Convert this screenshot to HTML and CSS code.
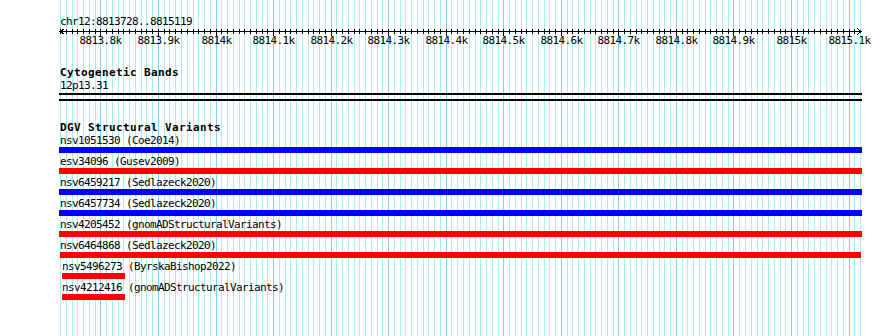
FILE: index.html
```html
<!DOCTYPE html>
<html lang="en">
  <head>
    <meta charset="UTF-8" />
    <meta name="viewport" content="width=device-width, initial-scale=1.0" />
    <title>chr12:8813728..8815119</title>
    <link rel="stylesheet" href="styles.css">
  </head>
  <body>
    <div class="panel">
      <svg class="grid" id="grid" width="803" height="336"></svg>

      <div class="ruler-track">
        <div class="ruler-title">chr12:8813728..8815119</div>
        <svg class="ruler" id="ruler" width="803" height="20"></svg>
      </div>

      <div class="track">
        <div class="track-title">Cytogenetic Bands</div>
        <div class="label">12p13.31</div>
        <div class="band-lines"></div>
      </div>

      <div class="track dgv">
        <div class="track-title">DGV Structural Variants</div>
        <div class="feature">
          <div class="label">nsv1051530 (Coe2014)</div>
          <div class="bar blue"></div>
        </div>
        <div class="feature">
          <div class="label">esv34096 (Gusev2009)</div>
          <div class="bar red"></div>
        </div>
        <div class="feature">
          <div class="label">nsv6459217 (Sedlazeck2020)</div>
          <div class="bar blue"></div>
        </div>
        <div class="feature">
          <div class="label">nsv6457734 (Sedlazeck2020)</div>
          <div class="bar blue"></div>
        </div>
        <div class="feature">
          <div class="label">nsv4205452 (gnomADStructuralVariants)</div>
          <div class="bar red"></div>
        </div>
        <div class="feature">
          <div class="label">nsv6464868 (Sedlazeck2020)</div>
          <div class="bar red inset"></div>
        </div>
        <div class="feature short">
          <div class="label">nsv5496273 (ByrskaBishop2022)</div>
          <div class="bar red"></div>
        </div>
        <div class="feature short">
          <div class="label">nsv4212416 (gnomADStructuralVariants)</div>
          <div class="bar red"></div>
        </div>
      </div>
    </div>

    <script>
      const START = 8813728;
      const END = 8815119;
      const SCALE = 0.5755;
      const NS = "http://www.w3.org/2000/svg";

      // pixel column of a base position, relative to the panel (page x 59)
      function px(pos) {
        return Math.floor(59.5 + (pos - START) * SCALE) - 59;
      }

      function add(svg, tag, attrs, text) {
        const el = document.createElementNS(NS, tag);
        for (const k in attrs) el.setAttribute(k, attrs[k]);
        if (text) el.textContent = text;
        svg.appendChild(el);
        return el;
      }

      const grid = document.getElementById("grid");
      const ruler = document.getElementById("ruler");

      // main ruler line with arrow heads
      add(ruler, "line", { x1: 1, y1: 4.5, x2: 802, y2: 4.5, class: "stroke" });
      add(ruler, "polyline", { points: "5,2 1,4.5 5,7", class: "stroke" });
      add(ruler, "polyline", { points: "798,1 802,4.5 798,8", class: "stroke" });

      for (let pos = Math.ceil(START / 10) * 10; pos <= END + 1; pos += 10) {
        const x = px(pos) + 0.5;
        const major = pos % 100 === 0;

        add(grid, "line", {
          x1: x, y1: 0, x2: x, y2: 336,
          class: major ? "major" : "minor"
        });

        if (pos > END) continue;
        add(ruler, "line", { x1: x, y1: 2, x2: x, y2: major ? 9 : 7, class: "stroke" });
        if (major) {
          add(ruler, "text", { x: x, y: 17, class: "tick-label" }, (pos / 1000) + "k");
        }
      }
    </script>
  </body>
</html>
```

FILE: styles.css
```css
body {
  margin: 0;
  background-color: #fff;
  color: #000;
  font-family: "DejaVu Sans Mono", "Liberation Mono", monospace;
  font-size: 11px;
  letter-spacing: -0.62px;
}

.panel {
  position: relative;
  box-sizing: border-box;
  width: 803px;
  height: 336px;
  margin-left: 59px;
  padding-top: 17px;
}

.grid {
  position: absolute;
  top: 0;
  left: 0;
  shape-rendering: crispEdges;
}

.grid .minor {
  stroke: #afeeee;
}

.grid .major {
  stroke: #87cefa;
}

.ruler-track,
.track {
  position: relative;
}

.ruler-title {
  line-height: 10px;
  padding-left: 1px;
}

.ruler {
  display: block;
  overflow: visible;
  shape-rendering: crispEdges;
}

.ruler .stroke {
  stroke: #000;
  stroke-width: 1;
  fill: none;
}

.tick-label {
  fill: #000;
  text-anchor: middle;
  font-family: "DejaVu Sans Mono", "Liberation Mono", monospace;
  font-size: 11px;
  letter-spacing: -0.62px;
}

.track {
  margin-top: 20px;
}

.track-title {
  font-weight: bold;
  letter-spacing: 0.38px;
  line-height: 12px;
  padding-left: 1px;
}

.dgv .track-title {
  line-height: 13px;
}

.label {
  line-height: 13px;
  padding-left: 1px;
  white-space: pre;
}

.band-lines {
  height: 4px;
  margin-top: 1px;
  border-top: 2px solid #000;
  border-bottom: 2px solid #000;
}

.bar {
  height: 6px;
  margin-bottom: 2px;
}

.bar.blue {
  background-color: #00f;
}

.bar.red {
  background-color: #f00;
}

.bar.inset {
  margin-left: 1px;
  margin-right: 1px;
}

.feature.short .label {
  padding-left: 3px;
}

.feature.short .bar {
  width: 63px;
  margin-left: 3px;
}
```
